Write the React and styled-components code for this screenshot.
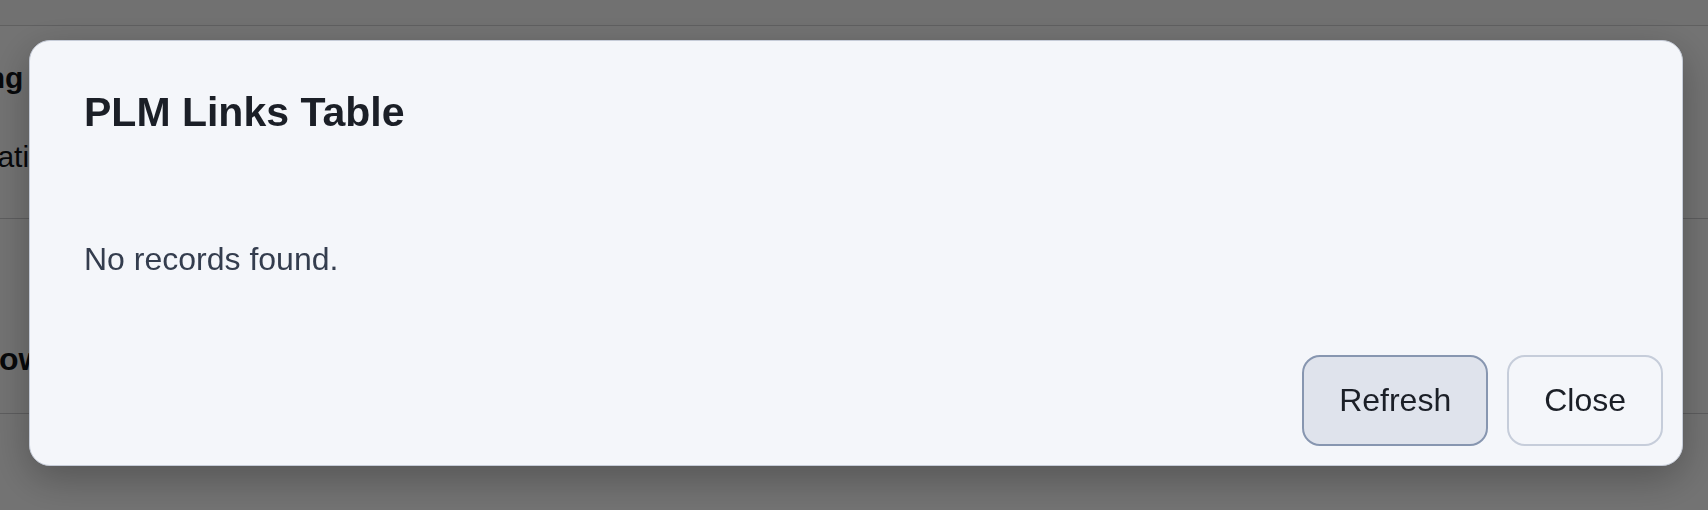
import React from 'react'
import styled, { createGlobalStyle } from 'styled-components'

const GlobalStyle = createGlobalStyle`
  html, body {
    margin: 0;
    padding: 0;
    height: 100%;
    background: #ffffff;
    font-family: "Liberation Sans", Arial, Helvetica, sans-serif;
    overflow: hidden;
  }
  #root {
    height: 100%;
  }
`

const Page = styled.div`
  height: 100%;
  display: flex;
  flex-direction: column;
  color: #111318;
`

const TopBar = styled.header`
  height: 25px;
  flex-shrink: 0;
  background: #fbfbfb;
  border-bottom: 1px solid #d4d4d6;
`

const Section = styled.section`
  height: ${(p) => p.$height}px;
  box-sizing: border-box;
  flex-shrink: 0;
  padding-top: ${(p) => p.$top}px;
  border-bottom: 1px solid #cfcfd2;
  overflow: hidden;
`

const SectionTitle = styled.div`
  font-size: ${(p) => p.$size}px;
  line-height: ${(p) => p.$size + 6}px;
  font-weight: 700;
  white-space: nowrap;
  margin-left: ${(p) => p.$shift}px;
`

const SectionText = styled.div`
  font-size: 30px;
  line-height: 36px;
  margin-top: 43px;
  white-space: nowrap;
  margin-left: -116px;
`

const Overlay = styled.div`
  position: fixed;
  inset: 0;
  background: rgba(0, 0, 0, 0.55);
  display: flex;
  align-items: flex-start;
  padding: 40px 25px 0 29px;
`

const Modal = styled.div`
  flex: 1;
  height: 426px;
  box-sizing: border-box;
  display: flex;
  flex-direction: column;
  background: #f4f6fa;
  border: 1px solid #c6ccd8;
  border-radius: 21px;
  box-shadow: 0 12px 40px rgba(0, 0, 0, 0.28);
  overflow: hidden;
`

const ModalHeader = styled.div`
  padding: 47px 54px 0;
`

const Title = styled.h2`
  margin: 0;
  font-size: 41px;
  line-height: 49px;
  font-weight: 700;
  color: #1b1f27;
`

const ModalBody = styled.div`
  flex: 1;
  padding: 98px 54px 0;
`

const Message = styled.p`
  margin: 0;
  font-size: 32px;
  line-height: 48px;
  color: #343d4e;
`

const ModalFooter = styled.div`
  display: flex;
  justify-content: flex-end;
  gap: 19px;
  padding: 0 19px 19px;
`

const Button = styled.button`
  height: 91px;
  padding: 0 35px;
  border-radius: 18px;
  font-family: inherit;
  font-size: 32px;
  color: #1b1f27;
  cursor: pointer;
  background: ${(p) => (p.$primary ? '#dfe3ec' : '#f4f6fa')};
  border: 2px solid ${(p) => (p.$primary ? '#8796b0' : '#c6cdda')};
`

const App = () => (
  <>
    <GlobalStyle />
    <Page>
      <TopBar />
      <Section $height={193} $top={34}>
        <SectionTitle $size={30} $shift={-100}>
          Tracking settings
        </SectionTitle>
        <SectionText>Configuration</SectionText>
      </Section>
      <Section $height={195} $top={121}>
        <SectionTitle $size={32} $shift={-100}>
          Workflow
        </SectionTitle>
      </Section>
    </Page>
    <Overlay>
      <Modal role="dialog" aria-modal="true">
        <ModalHeader>
          <Title>PLM Links Table</Title>
        </ModalHeader>
        <ModalBody>
          <Message>No records found.</Message>
        </ModalBody>
        <ModalFooter>
          <Button $primary>Refresh</Button>
          <Button>Close</Button>
        </ModalFooter>
      </Modal>
    </Overlay>
  </>
)

export default App
